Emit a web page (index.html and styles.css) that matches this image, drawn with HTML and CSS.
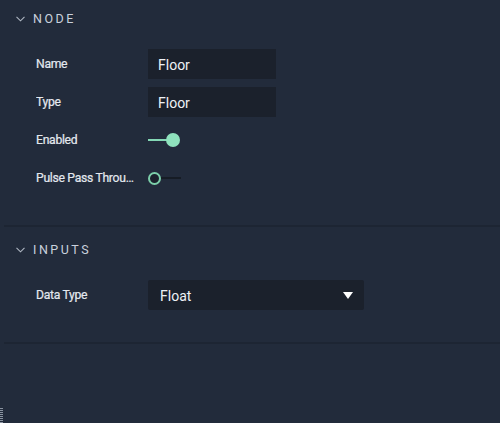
FILE: index.html
```html
<!DOCTYPE html>
<html>
<head>
<meta charset="utf-8">
<link rel="stylesheet" href="styles.css">
</head>
<body>
<div class="panel">
  <section class="section">
    <div class="section-header">
      <svg class="chevron" width="9" height="6" viewBox="0 0 9 6"><path d="M0.5 0.8 L4.5 4.8 L8.5 0.8" fill="none" stroke="#aeb6c2" stroke-width="1.1"/></svg>
      <span class="section-title">NODE</span>
    </div>
    <div class="rows">
      <div class="row">
        <div class="label">Name</div>
        <div class="field field-text">Floor</div>
      </div>
      <div class="row">
        <div class="label">Type</div>
        <div class="field field-text">Floor</div>
      </div>
      <div class="row">
        <div class="label">Enabled</div>
        <div class="toggle on"><span class="track"></span><span class="knob"></span></div>
      </div>
      <div class="row">
        <div class="label">Pulse Pass Through</div>
        <div class="toggle off"><span class="knob"></span><span class="track"></span></div>
      </div>
    </div>
  </section>
  <div class="divider"></div>
  <section class="section second">
    <div class="section-header">
      <svg class="chevron" width="9" height="6" viewBox="0 0 9 6"><path d="M0.5 0.8 L4.5 4.8 L8.5 0.8" fill="none" stroke="#aeb6c2" stroke-width="1.1"/></svg>
      <span class="section-title">INPUTS</span>
    </div>
    <div class="rows">
      <div class="row">
        <div class="label">Data Type</div>
        <div class="field field-select"><span>Float</span><svg class="caret" width="10" height="7" viewBox="0 0 10 7"><path d="M0 0 H10 L5 7 Z" fill="#ffffff"/></svg></div>
      </div>
    </div>
  </section>
  <div class="divider"></div>
  <div class="grip"></div>
</div>
</body>
</html>
```
FILE: styles.css
```css
html, body {
  margin: 0;
  padding: 0;
  background: #222b3b;
  height: 100%;
}
body {
  font-family: Roboto, "Liberation Sans", sans-serif;
  color: #dde2ea;
  overflow: hidden;
}
.panel {
  position: relative;
  height: 423px;
  width: 500px;
}
.section {
  padding-bottom: 32px;
}
.section.second {
  padding-top: 4px;
}
.section-header {
  height: 36px;
  display: flex;
  align-items: center;
  padding-left: 16px;
  margin-bottom: 13px;
}
.chevron {
  display: block;
  margin-right: 8px;
  margin-top: 1px;
}
.section-title {
  font-size: 12.5px;
  font-weight: 400;
  letter-spacing: 2.5px;
  color: #c9d1dd;
}
.rows {
  display: flex;
  flex-direction: column;
  gap: 8px;
  padding-left: 36px;
}
.row {
  height: 30px;
  display: flex;
  align-items: center;
}
.label {
  width: 99px;
  margin-right: 13px;
  font-size: 12.2px;
  font-weight: 400;
  letter-spacing: -0.3px;
  color: #e4e8ef;
  -webkit-text-stroke: 0.2px #e4e8ef;
  white-space: nowrap;
  overflow: hidden;
  text-overflow: ellipsis;
}
.field {
  height: 30px;
  background: #1b212c;
  display: flex;
  align-items: center;
  font-size: 14px;
  color: #eef1f5;
  box-sizing: border-box;
  padding-top: 1px;
}
.field-text {
  width: 128px;
  padding-left: 10px;
}
.field-select {
  width: 216px;
  padding-left: 12px;
  padding-right: 11px;
  justify-content: space-between;
  border-radius: 2px;
}
.caret {
  display: block;
}
.toggle {
  width: 32px;
  height: 14px;
  display: flex;
  align-items: center;
}
.toggle .track {
  height: 2px;
  flex: 1;
}
.toggle .knob {
  width: 14px;
  height: 14px;
  border-radius: 50%;
  box-sizing: border-box;
  flex: none;
}
.toggle.on .track {
  background: #84d8b5;
  margin-right: -1px;
}
.toggle.on .knob {
  background: #8fe2bd;
}
.toggle.off .knob {
  background: #1b212c;
  border: 2px solid #7ccfaa;
  width: 13px;
  height: 13px;
}
.toggle.off .track {
  background: #161c25;
  margin-right: -1px;
}
.divider {
  height: 2px;
  margin-left: 4px;
  background: #1d2533;
}
.grip {
  position: absolute;
  left: 0;
  bottom: 0;
  width: 3px;
  height: 15px;
  background: repeating-linear-gradient(to bottom, #8a93a0 0 1px, transparent 1px 2px);
}
```
